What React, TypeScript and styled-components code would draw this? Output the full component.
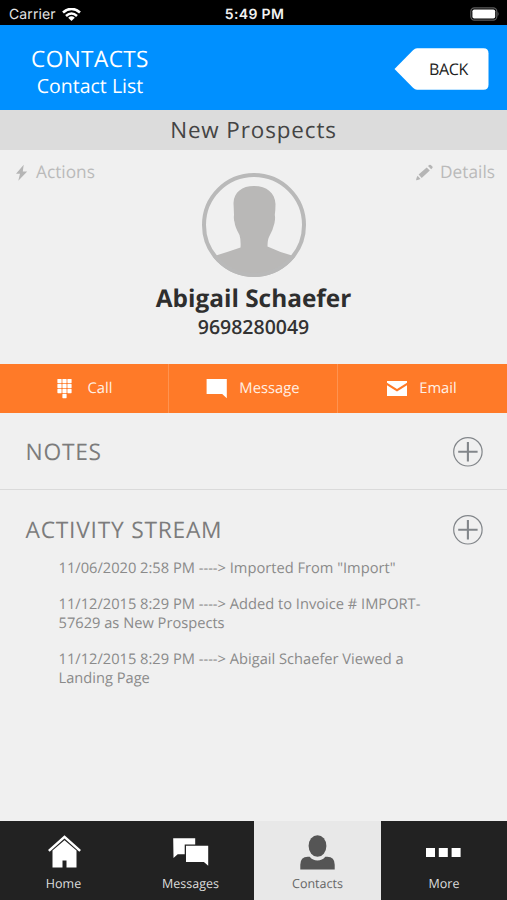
import React from 'react';
import styled, { createGlobalStyle } from 'styled-components';

const GlobalStyle = createGlobalStyle`
  * { box-sizing: border-box; }
  body { margin: 0; background: #f0f0f0; text-rendering: geometricPrecision; }
  h1, h2, h3, p, ul { margin: 0; padding: 0; font-weight: 400; }
  svg { display: block; flex: none; }
  button { font: inherit; border: 0; padding: 0; background: none; color: inherit; text-rendering: inherit; }
`;

const Screen = styled.div`
  width: 507px;
  height: 900px;
  display: flex;
  flex-direction: column;
  overflow: hidden;
  background: #f0f0f0;
  font-family: 'Open Sans', 'Noto Sans', sans-serif;
`;

const StatusBar = styled.div`
  flex: none;
  height: 25px;
  display: grid;
  grid-template-columns: 1fr auto 1fr;
  align-items: center;
  padding: 3px 7px 0 9px;
  background: #000;
  color: #e4e4e4;
  font: 400 14px/20px Inter, sans-serif;
`;
const Carrier = styled.div`
  display: flex;
  align-items: center;
  gap: 6px;
  padding-top: 1px;
  letter-spacing: 0.1px;
`;
const Clock = styled.div`
  padding-top: 1px;
  font-weight: 600;
  font-size: 14px;
  letter-spacing: 0.35px;
  color: #f2f2f2;
`;
const BatterySlot = styled.div`
  display: flex;
  justify-content: flex-end;
  padding-bottom: 1px;
`;

const Header = styled.header`
  flex: none;
  height: 85px;
  display: flex;
  justify-content: space-between;
  padding: 18px 18px 0 30px;
  background: #0090ff;
  color: #fff;
`;
const HeaderTitles = styled.div`
  width: 120px;
  padding-top: 1px;
  text-align: center;
  white-space: nowrap;
`;
const HeaderTitle = styled.h1`
  font-size: 22.6px;
  line-height: 30px;
  letter-spacing: 0.4px;
`;
const HeaderSubtitle = styled.p`
  font-size: 19.5px;
  line-height: 24px;
`;
const BackButton = styled.button`
  position: relative;
  width: 95px;
  height: 42px;
  margin-top: 5px;
`;
const BackShape = styled.svg`
  position: absolute;
  inset: 0;
`;
const BackLabel = styled.span`
  position: relative;
  display: block;
  padding-left: 14px;
  text-align: center;
  color: #222;
  font-size: 16px;
  line-height: 43px;
  letter-spacing: -0.3px;
`;

const ListName = styled.h2`
  flex: none;
  height: 40px;
  background: #dcdcdc;
  color: #444;
  text-align: center;
  font-size: 22.4px;
  line-height: 39px;
  letter-spacing: 0.9px;
`;

const Profile = styled.section`
  flex: none;
  height: 214px;
  display: grid;
  grid-template-columns: 1fr 104px 1fr;
  grid-template-rows: 128px 42px 24px;
`;
const ProfileLink = styled.button<{ $end?: boolean }>`
  display: flex;
  align-items: center;
  align-self: start;
  justify-self: ${p => (p.$end ? 'end' : 'start')};
  gap: 7px;
  padding: ${p => (p.$end ? '10px 12px 0 0' : '10px 0 0 14px')};
  color: #bababa;
  font-size: 17.3px;
  line-height: 24px;
`;
const ProfileLinkLabel = styled.span`
  padding-top: 1px;
`;
const Avatar = styled.svg`
  margin-top: 23px;
`;
const PersonName = styled.h3`
  grid-column: 1 / -1;
  text-align: center;
  color: #2e2e2e;
  font-size: 24.4px;
  font-weight: 700;
  line-height: 42px;
`;
const Phone = styled.p`
  grid-column: 1 / -1;
  margin-top: -5px;
  text-align: center;
  color: #333;
  font-size: 19.5px;
  font-weight: 600;
  line-height: 24px;
`;

const ContactActions = styled.div`
  flex: none;
  height: 49px;
  display: grid;
  grid-template-columns: 169px 169px 169px;
  background: #ff7a28;
`;
const ContactAction = styled.button<{ $gap: number }>`
  display: flex;
  align-items: center;
  justify-content: center;
  gap: ${p => p.$gap}px;
  color: #fff0e4;
  font-size: 14.8px;
  line-height: 20px;
  border-right: 1px solid #ff9350;

  &:first-child {
    padding-left: 2px;
  }
  &:last-child {
    border-right-color: transparent;
  }
`;
const ActionLabel = styled.span`
  padding-bottom: 2px;
`;

const Section = styled.section<{ $divided?: boolean }>`
  flex: none;
  padding: 23px 24px 0 25.5px;
  ${p => p.$divided && 'height: 77px; border-bottom: 1px solid #dadada; margin-bottom: 1px;'}
`;
const SectionHead = styled.div`
  display: flex;
  align-items: center;
  justify-content: space-between;
  height: 32px;
`;
const SectionTitle = styled.h2`
  color: #7c7c7c;
  font-size: 22.8px;
  line-height: 32px;
  letter-spacing: 0.75px;
`;
const Stream = styled.ul`
  list-style: none;
  width: 390px;
  margin: 12.8px 0 0 33px;
  display: flex;
  flex-direction: column;
  gap: 18.3px;
  color: #8a8a8a;
  font-size: 14.67px;
  line-height: 18.3px;
`;
const StreamItem = styled.li`
  white-space: pre-line;
`;

const TabBar = styled.nav`
  flex: none;
  height: 79px;
  margin-top: auto;
  display: grid;
  grid-template-columns: 127px 127px 127px 126px;
  background: #222;
`;
const Tab = styled.button<{ $active?: boolean }>`
  display: flex;
  flex-direction: column;
  align-items: center;
  padding: 13px 0 0;
  gap: 5px;
  background: ${p => (p.$active ? '#e8e8e8' : '#222')};
  color: ${p => (p.$active ? '#666' : '#dedede')};
  font-size: 12.5px;
  line-height: 18px;
`;

const Wifi = () => (
  <svg width="19" height="14" viewBox="0 0 19 14" fill="none" stroke="#fff" strokeWidth="2.6">
    <path d="M1 4.6Q9.5-2.8 18 4.6M4 7.9Q9.5 3.1 15 7.9" />
    <path d="M6.2 9.7Q9.5 6.8 12.8 9.7L9.5 13Z" fill="#fff" stroke="none" />
  </svg>
);
const Battery = () => (
  <svg width="30" height="14" viewBox="0 0 30 14">
    <rect x="0.8" y="0.8" width="26" height="12.4" rx="3.6" fill="none" stroke="#5c5c5c" strokeWidth="1.2" />
    <rect x="2.4" y="2.4" width="22.8" height="9.2" rx="1.8" fill="#fff" />
    <path d="M27.6 4.6q2 2.4 0 4.8z" fill="#666" />
  </svg>
);
const Bolt = () => (
  <svg width="15" height="18" viewBox="0 0 15 18" fill="#b5b5b5">
    <path d="M9.7.8 2 9.8h4L4.3 16.8 13.2 7.6H8.8z" />
  </svg>
);
const Pencil = () => (
  <svg width="18" height="18" viewBox="0 0 18 18" fill="#b5b5b5">
    <path d="M3.6 10.6 11.7 3.4 14.8 6.6 6.7 14zM13 2.1l1.2-1.1q.8-.7 1.6 0l1.6 1.6q.6.8 0 1.5l-1.2 1.2zM2.6 11.8l2.9 3.1-2 .8-1.9.5q-.5.1-.5-.5l.5-2z" />
  </svg>
);
const Silhouette = () => (
  <Avatar width="104" height="104" viewBox="0 0 104 104">
    <clipPath id="avatar-disc"><circle cx="52" cy="52" r="52" /></clipPath>
    <g clipPath="url(#avatar-disc)" fill="#b9b8b7">
      <path d="M0 110V86L14 82.5Q27 78.5 38.5 74.5Q39 67 37.5 62Q33 54 32.5 49Q31.5 46 32 42Q31.7 34 31.5 30C32 19 40 13 52 13C65 13 73 20 73.5 31Q73.5 37 72.8 42Q73.5 45 72.5 50Q71 57 67 64Q65.5 67 65.5 73.5Q77 79 90 82.5L104 86V110Z" />
    </g>
    <circle cx="52" cy="52" r="50" fill="none" stroke="#b9b9b9" strokeWidth="4" />
  </Avatar>
);
const Keypad = () => (
  <svg width="15" height="20" viewBox="0 0 15 20" fill="#fff">
    {[0, 5, 10].map(y => [0, 5, 10].map(x => <rect key={`${x}-${y}`} x={x + 0.4} y={y} width="4.2" height="4.2" rx="0.6" />))}
    <rect x="5.4" y="15" width="4.2" height="4.2" rx="0.6" />
  </svg>
);
const Bubble = () => (
  <svg width="21" height="20" viewBox="0 0 21 20" fill="#fff">
    <path d="M.6 0h20.2v19.2L16.2 15.1H.6z" />
  </svg>
);
const Envelope = () => (
  <svg width="20" height="15" viewBox="0 0 20 15" fill="#fff">
    <path d="M0 0h20v1.8L10 8.1 0 1.8zM0 4.3l10 6.3 10-6.3V15H0z" />
  </svg>
);
const AddIcon = () => (
  <svg width="30" height="30" viewBox="0 0 30 30" fill="none" stroke="#82868a">
    <circle cx="14.9" cy="14.8" r="14.2" strokeWidth="1.2" />
    <path d="M14.9 5.1v19.4M5.2 14.8h19.4" strokeWidth="2.1" />
  </svg>
);
const HomeIcon = () => (
  <svg width="36" height="36" viewBox="0 0 36 36" fill="#fff">
    <path d="M18.5 1.2 35 16l-1.7 1.8L18.5 4.6 3.7 17.8 2 16z" />
    <path d="M18.5 6.2 30.5 16.6V33.4H20.5V26.6h-4v6.8h-10V16.6z" />
  </svg>
);
const MessagesIcon = () => (
  <svg width="36" height="36" viewBox="0 0 36 36" fill="#fff">
    <path d="M.2 4.2h22v6.3H11.7V20.2H4.7L.5 24z" />
    <path d="M13 11.8h22.2v20L30.9 28H13z" />
  </svg>
);
const ContactIcon = () => (
  <svg width="36" height="36" viewBox="0 0 36 36" fill="#555">
    <ellipse cx="17.5" cy="12" rx="8.9" ry="10.8" />
    <path d="M.3 35.6V30.7Q.3 22.8 7.8 22.7h1.9q3 3.8 7.8 3.8t7.8-3.8h1.9Q34.7 22.8 34.7 30.7V35.6z" />
  </svg>
);
const MoreIcon = () => (
  <svg width="36" height="36" viewBox="0 0 36 36" fill="#fff">
    {[0, 12.8, 25.6].map(x => <rect key={x} x={x} y="14" width="9" height="9" />)}
  </svg>
);

const activity = [
  '11/06/2020 2:58 PM ----> Imported From "Import"',
  '11/12/2015 8:29 PM ----> Added to Invoice # IMPORT-\n57629 as New Prospects',
  '11/12/2015 8:29 PM ----> Abigail Schaefer Viewed a\nLanding Page',
];

export default function App() {
  return (
    <Screen>
      <GlobalStyle />
      <StatusBar>
        <Carrier>Carrier<Wifi /></Carrier>
        <Clock>5:49 PM</Clock>
        <BatterySlot><Battery /></BatterySlot>
      </StatusBar>
      <Header>
        <HeaderTitles>
          <HeaderTitle>CONTACTS</HeaderTitle>
          <HeaderSubtitle>Contact List</HeaderSubtitle>
        </HeaderTitles>
        <BackButton>
          <BackShape width="95" height="42" viewBox="0 0 95 42">
            <path d="M.5 21 19 2.2Q21 .3 23 .3h66.5q5 0 5 5v31.4q0 5-5 5H23q-2 0-4-1.9z" fill="#fff" />
          </BackShape>
          <BackLabel>BACK</BackLabel>
        </BackButton>
      </Header>
      <ListName>New Prospects</ListName>
      <Profile>
        <ProfileLink><Bolt /><ProfileLinkLabel>Actions</ProfileLinkLabel></ProfileLink>
        <Silhouette />
        <ProfileLink $end><Pencil /><ProfileLinkLabel>Details</ProfileLinkLabel></ProfileLink>
        <PersonName>Abigail Schaefer</PersonName>
        <Phone>9698280049</Phone>
      </Profile>
      <ContactActions>
        <ContactAction $gap={15}><Keypad /><ActionLabel>Call</ActionLabel></ContactAction>
        <ContactAction $gap={12}><Bubble /><ActionLabel>Message</ActionLabel></ContactAction>
        <ContactAction $gap={12}><Envelope /><ActionLabel>Email</ActionLabel></ContactAction>
      </ContactActions>
      <Section $divided>
        <SectionHead>
          <SectionTitle>NOTES</SectionTitle>
          <button aria-label="Add note"><AddIcon /></button>
        </SectionHead>
      </Section>
      <Section>
        <SectionHead>
          <SectionTitle>ACTIVITY STREAM</SectionTitle>
          <button aria-label="Add activity"><AddIcon /></button>
        </SectionHead>
        <Stream>{activity.map(text => <StreamItem key={text}>{text}</StreamItem>)}</Stream>
      </Section>
      <TabBar>
        <Tab><HomeIcon />Home</Tab>
        <Tab><MessagesIcon />Messages</Tab>
        <Tab $active><ContactIcon />Contacts</Tab>
        <Tab><MoreIcon />More</Tab>
      </TabBar>
    </Screen>
  );
}
